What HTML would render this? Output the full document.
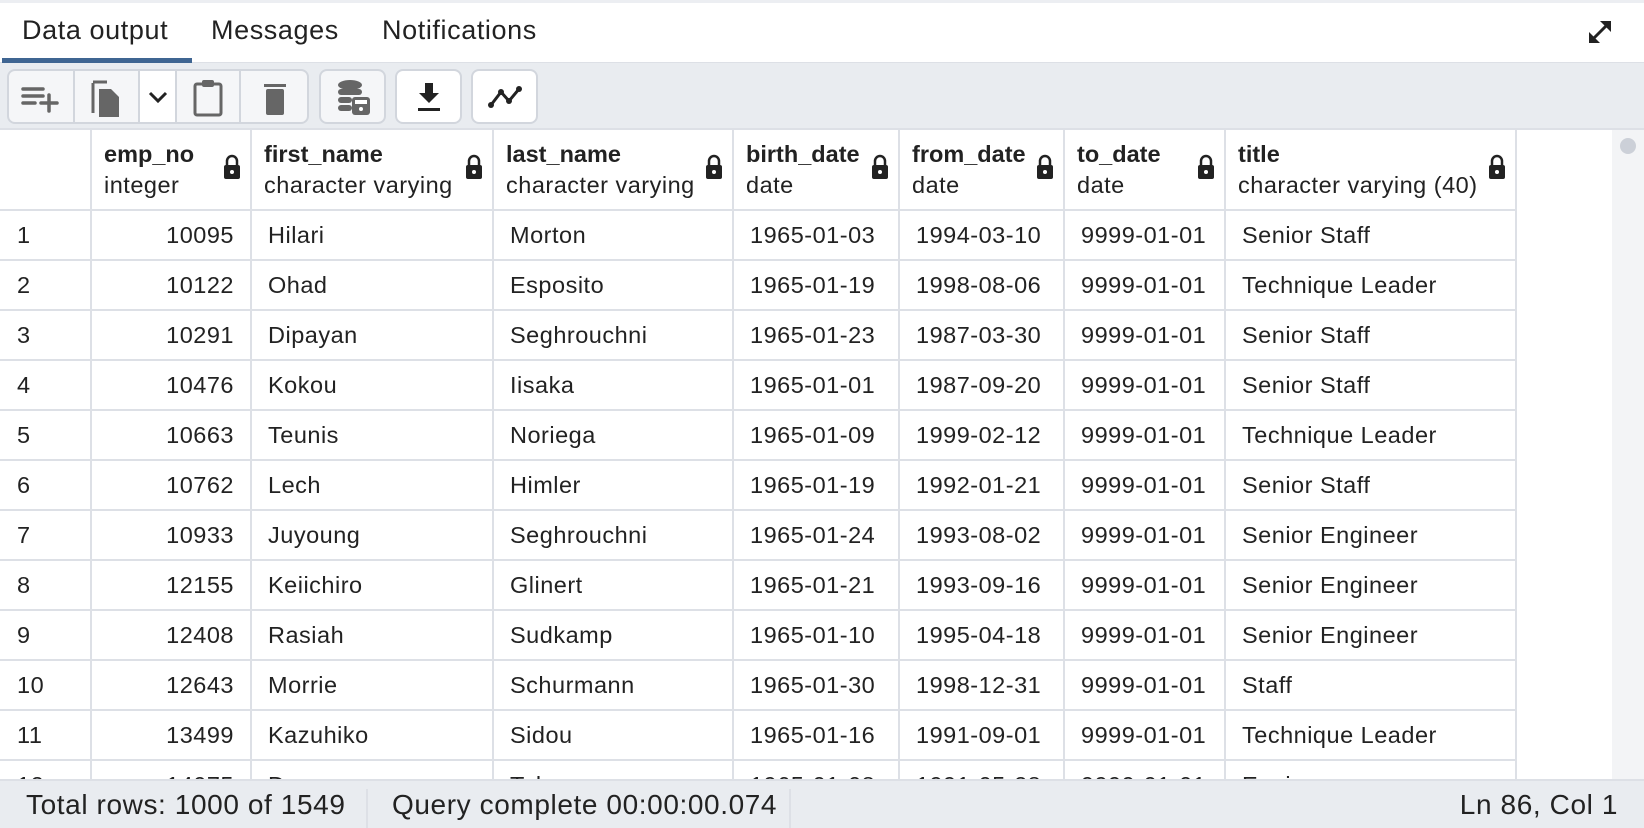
<!DOCTYPE html>
<html><head><meta charset="utf-8"><style>
*{margin:0;padding:0;box-sizing:border-box}
body{width:1644px;height:828px;overflow:hidden;background:#fff;font-family:"Liberation Sans",Arial,sans-serif;color:#222;position:relative}
.top{position:absolute;left:0;top:0;width:1644px;height:3px;background:#eceef2}
.tabs{position:absolute;left:0;top:3px;width:1644px;height:60px;background:#fff;border-bottom:1px solid #dde0e6}
.tab{position:absolute;top:12px;font-size:27px;letter-spacing:0.6px;color:#222}
.ul{position:absolute;left:2px;top:55px;width:190px;height:5px;background:#3f6592}
.tb{position:absolute;left:0;top:63px;width:1644px;height:67px;background:#e9ecf0;border-bottom:2px solid #dde0e6}
.btn{position:absolute;top:6px;height:55px;background:#f5f6f8;border:2px solid #d2d6dd;border-radius:8px}
.btn.w{background:#fff}
.seg{position:absolute;top:0;bottom:0;border-left:2px solid #d2d6dd}
.grid{position:absolute;left:0;top:130px;width:1612px;height:649px;overflow:hidden;background:#fff}
.sb{position:absolute;left:1612px;top:130px;width:32px;height:649px;background:#f3f4f6}
.dot{position:absolute;left:1620px;top:138px;width:16px;height:16px;border-radius:50%;background:#ccd0d8}
table{border-collapse:collapse;table-layout:fixed;position:absolute;left:0;top:0}
td,th{border:2px solid #dde0e6;height:50px;font-size:23.5px;letter-spacing:0.5px;font-weight:normal;white-space:nowrap;overflow:hidden;padding:0 16px;text-align:left;color:#222}
tr:first-child td,tr:first-child th{border-top:none}
td:first-child,th:first-child{border-left:none;padding-left:17px}
th{height:80px;position:relative;vertical-align:top;padding:9px 12px 0;line-height:31px}
th b{display:block;font-weight:bold;font-size:23.5px;letter-spacing:0}
th span{display:block;font-size:23.5px}
.lk{position:absolute;right:9px;top:24px}
td.r{text-align:right}
.st{position:absolute;left:0;top:779px;width:1644px;height:49px;background:#e9ecf0;border-top:2px solid #dde0e6;font-size:28px;letter-spacing:0.6px;color:#222}
.st div{position:absolute;top:8px}
.sd{position:absolute;top:0;bottom:0;width:2px;background:#dde0e6}
</style></head><body>
<div class="top"></div>
<div class="tabs">
<div class="tab" style="left:22px">Data output</div>
<div class="tab" style="left:211px">Messages</div>
<div class="tab" style="left:382px">Notifications</div>
<div class="ul"></div>
<svg style="position:absolute;left:1586px;top:15px" width="28" height="28" viewBox="0 0 28 28"><path d="M4 24 L24 4" stroke="#222" stroke-width="3"/><path d="M14 3 H25 V14 Z" fill="#222"/><path d="M3 14 V25 H14 Z" fill="#222"/></svg>
</div>
<div class="tb">
<div class="btn" style="left:7px;width:302px">
 <div class="seg" style="left:64px"></div>
 <div class="seg" style="left:129px;width:39px;background:#fff;border-right:2px solid #d2d6dd"></div>
 <div class="seg" style="left:230px"></div>
 <svg style="position:absolute;left:12px;top:12px" width="40" height="30" viewBox="0 0 40 30"><g stroke="#666" stroke-width="3.5" stroke-linecap="round"><path d="M2 6H22M2 13H22M2 20H14M20 20H36M28 12V28"/></g></svg>
 <svg style="position:absolute;left:80px;top:8px" width="36" height="40" viewBox="0 0 36 40"><path d="M4 4V34" stroke="#666" stroke-width="3"/><path d="M4 3H18" stroke="#666" stroke-width="3"/><path d="M10 10H22L30 18V38H10Z" fill="#666"/></svg>
 <svg style="position:absolute;left:137px;top:18px" width="24" height="16" viewBox="0 0 24 16"><path d="M4 4L12 12L20 4" stroke="#222" stroke-width="3" fill="none"/></svg>
 <svg style="position:absolute;left:183px;top:6px" width="32" height="40" viewBox="0 0 32 40"><rect x="3" y="7" width="26" height="31" rx="2" fill="none" stroke="#666" stroke-width="3"/><rect x="10" y="3" width="12" height="7" rx="2" fill="#666"/></svg>
 <svg style="position:absolute;left:252px;top:8px" width="28" height="38" viewBox="0 0 28 38"><rect x="3" y="5" width="22" height="3" fill="#666"/><rect x="5" y="10" width="18" height="26" rx="2" fill="#666"/></svg>
</div>
<div class="btn" style="left:319px;width:67px">
 <svg style="position:absolute;left:15px;top:8px" width="36" height="38" viewBox="0 0 36 38"><ellipse cx="14" cy="6" rx="12" ry="5" fill="#666"/><rect x="2" y="10" width="24" height="6" rx="3" fill="#666"/><rect x="2" y="18" width="14" height="6" rx="3" fill="#666"/><rect x="2" y="26" width="14" height="6" rx="3" fill="#666"/><rect x="16" y="18" width="18" height="18" rx="3" fill="#666"/><rect x="19" y="21" width="12" height="4" fill="#fff"/><circle cx="25" cy="30" r="2" fill="#fff"/></svg>
</div>
<div class="btn w" style="left:395px;width:67px">
 <svg style="position:absolute;left:19px;top:10px" width="26" height="32" viewBox="0 0 26 32"><path d="M9 2H17V12H23L13 22L3 12H9Z" fill="#222"/><rect x="2" y="27" width="22" height="3" fill="#222"/></svg>
</div>
<div class="btn w" style="left:471px;width:67px">
 <svg style="position:absolute;left:14px;top:12px" width="36" height="30" viewBox="0 0 36 30"><path d="M4 22L14 9L22 18L32 6" stroke="#222" stroke-width="3" fill="none"/><circle cx="4" cy="22" r="3" fill="#222"/><circle cx="14" cy="9" r="3" fill="#222"/><circle cx="22" cy="18" r="3" fill="#222"/><circle cx="32" cy="6" r="3" fill="#222"/></svg>
</div>
</div>
<div class="grid">
<table>
<colgroup><col style="width:91px"><col style="width:160px"><col style="width:242px"><col style="width:240px"><col style="width:166px"><col style="width:165px"><col style="width:161px"><col style="width:291px"><col style="width:96px"></colgroup>
<tr><th></th>
<th><b>emp_no</b><span>integer</span><svg class="lk" width="18" height="26" viewBox="0 0 18 26"><path d="M4 11V7a5 5 0 0 1 10 0v4" stroke="#222" stroke-width="2.5" fill="none"/><rect x="1" y="11" width="16" height="14" rx="2" fill="#222"/><circle cx="9" cy="18" r="2" fill="#fff"/></svg></th>
<th><b>first_name</b><span>character varying</span><svg class="lk" width="18" height="26" viewBox="0 0 18 26"><path d="M4 11V7a5 5 0 0 1 10 0v4" stroke="#222" stroke-width="2.5" fill="none"/><rect x="1" y="11" width="16" height="14" rx="2" fill="#222"/><circle cx="9" cy="18" r="2" fill="#fff"/></svg></th>
<th><b>last_name</b><span>character varying</span><svg class="lk" width="18" height="26" viewBox="0 0 18 26"><path d="M4 11V7a5 5 0 0 1 10 0v4" stroke="#222" stroke-width="2.5" fill="none"/><rect x="1" y="11" width="16" height="14" rx="2" fill="#222"/><circle cx="9" cy="18" r="2" fill="#fff"/></svg></th>
<th><b>birth_date</b><span>date</span><svg class="lk" width="18" height="26" viewBox="0 0 18 26"><path d="M4 11V7a5 5 0 0 1 10 0v4" stroke="#222" stroke-width="2.5" fill="none"/><rect x="1" y="11" width="16" height="14" rx="2" fill="#222"/><circle cx="9" cy="18" r="2" fill="#fff"/></svg></th>
<th><b>from_date</b><span>date</span><svg class="lk" width="18" height="26" viewBox="0 0 18 26"><path d="M4 11V7a5 5 0 0 1 10 0v4" stroke="#222" stroke-width="2.5" fill="none"/><rect x="1" y="11" width="16" height="14" rx="2" fill="#222"/><circle cx="9" cy="18" r="2" fill="#fff"/></svg></th>
<th><b>to_date</b><span>date</span><svg class="lk" width="18" height="26" viewBox="0 0 18 26"><path d="M4 11V7a5 5 0 0 1 10 0v4" stroke="#222" stroke-width="2.5" fill="none"/><rect x="1" y="11" width="16" height="14" rx="2" fill="#222"/><circle cx="9" cy="18" r="2" fill="#fff"/></svg></th>
<th><b>title</b><span>character varying (40)</span><svg class="lk" width="18" height="26" viewBox="0 0 18 26"><path d="M4 11V7a5 5 0 0 1 10 0v4" stroke="#222" stroke-width="2.5" fill="none"/><rect x="1" y="11" width="16" height="14" rx="2" fill="#222"/><circle cx="9" cy="18" r="2" fill="#fff"/></svg></th>
<th style="border:none"></th></tr>
<tr><td>1</td><td class="r">10095</td><td>Hilari</td><td>Morton</td><td>1965-01-03</td><td>1994-03-10</td><td>9999-01-01</td><td>Senior Staff</td><td style="border:none"></td></tr>
<tr><td>2</td><td class="r">10122</td><td>Ohad</td><td>Esposito</td><td>1965-01-19</td><td>1998-08-06</td><td>9999-01-01</td><td>Technique Leader</td><td style="border:none"></td></tr>
<tr><td>3</td><td class="r">10291</td><td>Dipayan</td><td>Seghrouchni</td><td>1965-01-23</td><td>1987-03-30</td><td>9999-01-01</td><td>Senior Staff</td><td style="border:none"></td></tr>
<tr><td>4</td><td class="r">10476</td><td>Kokou</td><td>Iisaka</td><td>1965-01-01</td><td>1987-09-20</td><td>9999-01-01</td><td>Senior Staff</td><td style="border:none"></td></tr>
<tr><td>5</td><td class="r">10663</td><td>Teunis</td><td>Noriega</td><td>1965-01-09</td><td>1999-02-12</td><td>9999-01-01</td><td>Technique Leader</td><td style="border:none"></td></tr>
<tr><td>6</td><td class="r">10762</td><td>Lech</td><td>Himler</td><td>1965-01-19</td><td>1992-01-21</td><td>9999-01-01</td><td>Senior Staff</td><td style="border:none"></td></tr>
<tr><td>7</td><td class="r">10933</td><td>Juyoung</td><td>Seghrouchni</td><td>1965-01-24</td><td>1993-08-02</td><td>9999-01-01</td><td>Senior Engineer</td><td style="border:none"></td></tr>
<tr><td>8</td><td class="r">12155</td><td>Keiichiro</td><td>Glinert</td><td>1965-01-21</td><td>1993-09-16</td><td>9999-01-01</td><td>Senior Engineer</td><td style="border:none"></td></tr>
<tr><td>9</td><td class="r">12408</td><td>Rasiah</td><td>Sudkamp</td><td>1965-01-10</td><td>1995-04-18</td><td>9999-01-01</td><td>Senior Engineer</td><td style="border:none"></td></tr>
<tr><td>10</td><td class="r">12643</td><td>Morrie</td><td>Schurmann</td><td>1965-01-30</td><td>1998-12-31</td><td>9999-01-01</td><td>Staff</td><td style="border:none"></td></tr>
<tr><td>11</td><td class="r">13499</td><td>Kazuhiko</td><td>Sidou</td><td>1965-01-16</td><td>1991-09-01</td><td>9999-01-01</td><td>Technique Leader</td><td style="border:none"></td></tr>
<tr><td>12</td><td class="r">14075</td><td>Dong</td><td>Takano</td><td>1965-01-08</td><td>1991-05-28</td><td>9999-01-01</td><td>Engineer</td><td style="border:none"></td></tr>
</table>
</div>
<div class="sb"></div><div class="dot"></div>
<div class="st">
<div style="left:26px">Total rows: 1000 of 1549</div>
<div class="sd" style="left:366px"></div>
<div style="left:392px">Query complete 00:00:00.074</div>
<div class="sd" style="left:789px"></div>
<div style="right:26px">Ln 86, Col 1</div>
</div>
</body></html>
